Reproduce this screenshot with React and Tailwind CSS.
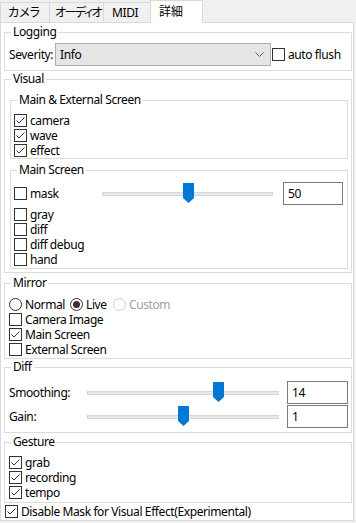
import React from "react";

const font = "font-['Noto_Sans','Noto_Sans_CJK_JP',sans-serif]";

function Check({ checked, label, className = "" }) {
  return (
    <div className={`flex items-center h-[15px] ${className}`}>
      <span className="w-[13px] h-[13px] flex-none border border-[#333333] bg-white flex items-center justify-center">
        {checked && (
          <svg width="11" height="11" viewBox="0 0 11 11">
            <path d="M1.5 5.5 L4 8 L9.5 2.5" fill="none" stroke="#333333" strokeWidth="1" />
          </svg>
        )}
      </span>
      <span className="ml-[3px] whitespace-nowrap">{label}</span>
    </div>
  );
}

function Radio({ checked, disabled, label, className = "" }) {
  return (
    <div className={`flex items-center h-[15px] ${className}`}>
      <span
        className={`w-[13px] h-[13px] flex-none rounded-full border bg-white flex items-center justify-center ${
          disabled ? "border-[#cccccc]" : "border-[#333333]"
        }`}
      >
        {checked && <span className="w-[7px] h-[7px] rounded-full bg-[#333333]" />}
      </span>
      <span className={`ml-[3px] whitespace-nowrap ${disabled ? "text-[#a0a0a0]" : ""}`}>{label}</span>
    </div>
  );
}

function Group({ title, className = "", children }) {
  return (
    <fieldset className={`border border-[#dcdcdc] ${className}`}>
      <legend className="ml-[6px] px-[2px] leading-[14px]">{title}</legend>
      {children}
    </fieldset>
  );
}

function Slider({ width, thumb }) {
  return (
    <div className={`relative h-[23px] flex items-center flex-none ${width}`}>
      <div className="w-full h-[4px] bg-[#e7eaea] border border-[#d6d6d6]" />
      <svg className={`absolute top-[1px] ${thumb}`} width="11" height="20" viewBox="0 0 11 20">
        <path d="M0 0H11V15L5.5 20L0 15Z" fill="#0078d7" />
      </svg>
    </div>
  );
}

function TextBox({ value, className = "" }) {
  return (
    <div className={`h-[23px] flex-none border border-[#7a7a7a] bg-white flex items-center pl-[4px] ${className}`}>
      {value}
    </div>
  );
}

export default function App() {
  return (
    <div className={`w-[356px] h-[523px] bg-[#f0f0f0] text-[12px] leading-[15px] tracking-[-0.4px] text-black ${font}`}>
      {/* tabs */}
      <div className="flex items-end h-[22px] whitespace-nowrap tracking-normal [font-feature-settings:'palt']">
        <div className="w-[50px] h-[20px] border-x border-t border-[#d9d9d9] flex items-center pl-[7px] overflow-hidden">
          カメラ
        </div>
        <div className="w-[54px] h-[20px] border-r border-t border-[#d9d9d9] flex items-center pl-[5px] tracking-[-1.5px] overflow-hidden">
          オーディオ
        </div>
        <div className="w-[46px] h-[20px] border-t border-[#d9d9d9] flex items-center pl-[8px] tracking-[-0.4px]">MIDI</div>
        <div className="relative z-10 w-[53px] h-[23px] -mb-[1px] bg-white border-x border-t border-[#d9d9d9] flex items-center pl-[8px] pb-[1px]">
          詳細
        </div>
      </div>

      {/* panel */}
      <div className="w-[354px] h-[499px] bg-white border border-[#d9d9d9] pt-[2px]">
        <Group title="Logging" className="ml-[3px] mr-[1px]">
          <div className="flex items-center h-[23px] my-[4px] pl-[4px]">
            <span className="w-[46px] flex-none">Severity:</span>
            <div className="w-[216px] h-[23px] flex-none bg-[#e5e5e5] border border-[#adadad] flex items-center justify-between pl-[4px] pr-[6px]">
              <span>Info</span>
              <svg width="9" height="5" viewBox="0 0 9 5">
                <polyline points="0.5,0.5 4.5,4.5 8.5,0.5" fill="none" stroke="#606060" strokeWidth="1" />
              </svg>
            </div>
            <Check label="auto flush" className="ml-[1px]" />
          </div>
        </Group>

        <Group title="Visual" className="mt-[1px] ml-[3px] mr-[1px]">
          <div className="pt-[7px] pb-[3px] pl-[5px] pr-[3px]">
            <Group title="Main & External Screen">
              <div className="pt-[6px] pl-[3px]">
                <Check checked label="camera" />
                <Check checked label="wave" />
                <Check checked label="effect" />
              </div>
            </Group>
            <Group title="Main Screen" className="mt-[4px]">
              <div className="pt-[5px] pb-[1px] pl-[3px]">
                <div className="flex items-center h-[23px]">
                  <Check label="mask" className="w-[88px] flex-none" />
                  <Slider width="w-[171px]" thumb="left-[81px]" />
                  <TextBox value="50" className="w-[60px] ml-[10px]" />
                </div>
                <div className="mt-[2px]">
                  <Check label="gray" />
                  <Check label="diff" />
                  <Check label="diff debug" />
                  <Check label="hand" />
                </div>
              </div>
            </Group>
          </div>
        </Group>

        <Group title="Mirror" className="mt-[3px] ml-[3px] mr-[1px]">
          <div className="pt-[7px] pb-[1px] pl-[4px]">
            <div className="flex">
              <Radio label="Normal" className="w-[61px]" />
              <Radio checked label="Live" className="w-[43px]" />
              <Radio disabled label="Custom" />
            </div>
            <Check label="Camera Image" />
            <Check checked label="Main Screen" />
            <Check label="External Screen" />
          </div>
        </Group>

        <Group title="Diff" className="mt-[1px] ml-[3px] mr-[1px]">
          <div className="pt-[7px] pb-[4px] pl-[4px] flex flex-col gap-[1px]">
            <div className="flex items-center h-[23px]">
              <span className="w-[78px] flex-none">Smoothing:</span>
              <Slider width="w-[192px]" thumb="left-[126px]" />
              <TextBox value="14" className="w-[61px] ml-[8px]" />
            </div>
            <div className="flex items-center h-[23px]">
              <span className="w-[78px] flex-none">Gain:</span>
              <Slider width="w-[192px]" thumb="left-[91px]" />
              <TextBox value="1" className="w-[61px] ml-[8px]" />
            </div>
          </div>
        </Group>

        <Group title="Gesture" className="mt-[2px] ml-[3px] mr-[1px]">
          <div className="pt-[6px] pb-[2px] pl-[4px]">
            <Check checked label="grab" />
            <Check checked label="recording" />
            <Check checked label="tempo" />
          </div>
        </Group>

        <Check checked label="Disable Mask for Visual Effect(Experimental)" className="mt-[1px] ml-[4px]" />
      </div>
    </div>
  );
}
